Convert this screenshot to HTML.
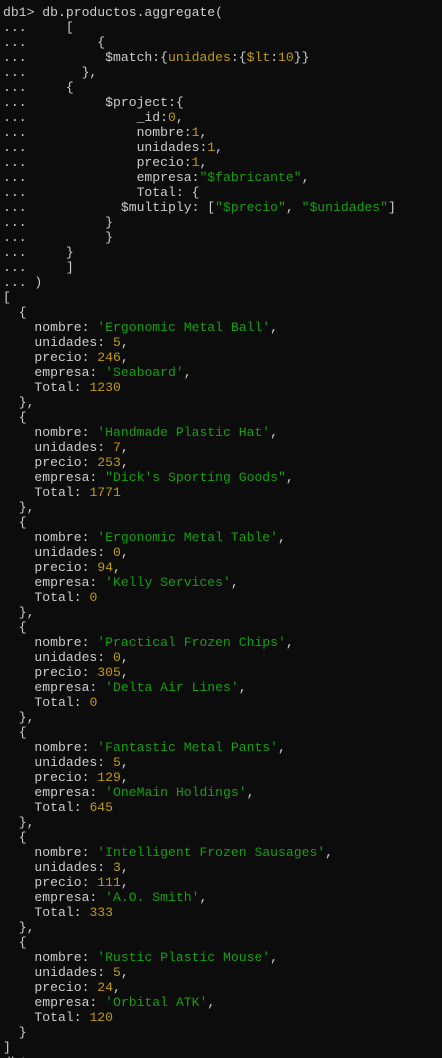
<!DOCTYPE html>
<html><head><meta charset="utf-8"><style>
html,body{margin:0;padding:0;background:#0c0c0c;width:442px;height:1058px;overflow:hidden}
pre{margin:0;padding:5px 0 0 3px;font-family:"Liberation Mono",monospace;font-size:13.1px;line-height:15px;color:#cccccc;white-space:pre}
.g{color:#13a10e}.y{color:#c19c00}
</style></head><body><pre>db1&gt; db.productos.aggregate(
...     [
...         {
...          $match:{<span class="y">unidades</span>:{<span class="y">$lt</span>:<span class="y">10</span>}}
...       },
...     {
...          $project:{
...              _id:<span class="y">0</span>,
...              nombre:<span class="y">1</span>,
...              unidades:<span class="y">1</span>,
...              precio:<span class="y">1</span>,
...              empresa:<span class="g">"$fabricante"</span>,
...              Total: {
...            $multiply: [<span class="g">"$precio"</span>, <span class="g">"$unidades"</span>]
...          }
...          }
...     }
...     ]
... )
[
  {
    nombre: <span class="g">'Ergonomic Metal Ball'</span>,
    unidades: <span class="y">5</span>,
    precio: <span class="y">246</span>,
    empresa: <span class="g">'Seaboard'</span>,
    Total: <span class="y">1230</span>
  },
  {
    nombre: <span class="g">'Handmade Plastic Hat'</span>,
    unidades: <span class="y">7</span>,
    precio: <span class="y">253</span>,
    empresa: <span class="g">"Dick's Sporting Goods"</span>,
    Total: <span class="y">1771</span>
  },
  {
    nombre: <span class="g">'Ergonomic Metal Table'</span>,
    unidades: <span class="y">0</span>,
    precio: <span class="y">94</span>,
    empresa: <span class="g">'Kelly Services'</span>,
    Total: <span class="y">0</span>
  },
  {
    nombre: <span class="g">'Practical Frozen Chips'</span>,
    unidades: <span class="y">0</span>,
    precio: <span class="y">305</span>,
    empresa: <span class="g">'Delta Air Lines'</span>,
    Total: <span class="y">0</span>
  },
  {
    nombre: <span class="g">'Fantastic Metal Pants'</span>,
    unidades: <span class="y">5</span>,
    precio: <span class="y">129</span>,
    empresa: <span class="g">'OneMain Holdings'</span>,
    Total: <span class="y">645</span>
  },
  {
    nombre: <span class="g">'Intelligent Frozen Sausages'</span>,
    unidades: <span class="y">3</span>,
    precio: <span class="y">111</span>,
    empresa: <span class="g">'A.O. Smith'</span>,
    Total: <span class="y">333</span>
  },
  {
    nombre: <span class="g">'Rustic Plastic Mouse'</span>,
    unidades: <span class="y">5</span>,
    precio: <span class="y">24</span>,
    empresa: <span class="g">'Orbital ATK'</span>,
    Total: <span class="y">120</span>
  }
]
db1&gt;</pre></body></html>
